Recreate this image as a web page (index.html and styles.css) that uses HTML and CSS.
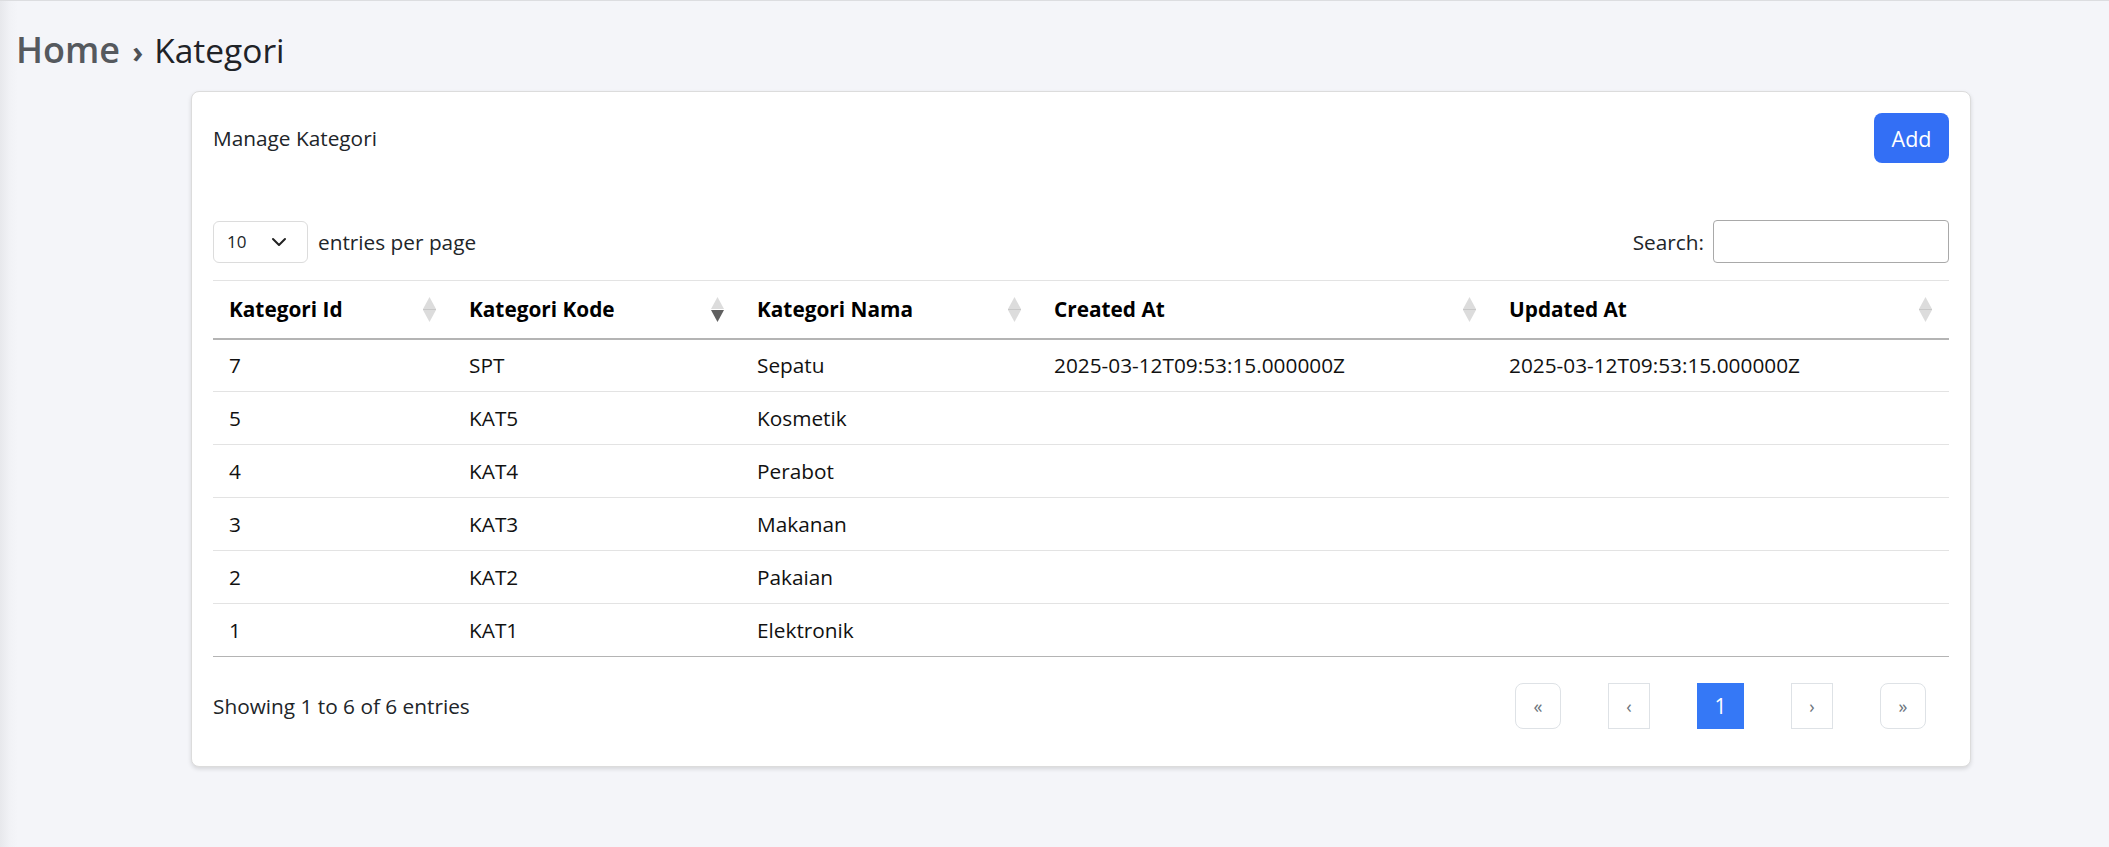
FILE: index.html
```html
<!DOCTYPE html>
<html lang="id">
<head>
<meta charset="utf-8">
<title>Kategori</title>
<link rel="stylesheet" href="styles.css">
</head>
<body>
<div class="page">
  <h1 class="crumbs"><span class="crumb-home">Home</span><span class="crumb-sep">›</span><span class="crumb-current">Kategori</span></h1>
  <div class="main">
    <section class="card">
      <div class="card-head">
        <span class="card-title">Manage Kategori</span>
        <button class="btn-add" type="button">Add</button>
      </div>
      <div class="dt-top">
        <div class="dt-length">
          <div class="select"><span>10</span>
            <svg class="chev" width="16" height="10" viewBox="0 0 16 10"><path d="M2 2l6 6 6-6" fill="none" stroke="#222" stroke-width="2" stroke-linecap="round" stroke-linejoin="round"/></svg>
          </div>
          <span>entries per page</span>
        </div>
        <label class="dt-search">Search:<span class="search-box"></span></label>
      </div>
      <table class="grid">
        <colgroup>
          <col class="c1"><col class="c2"><col class="c3"><col class="c4"><col class="c5">
        </colgroup>
        <thead>
          <tr>
            <th><div class="th-in"><span>Kategori Id</span><svg class="sort" width="13" height="25" viewBox="0 0 13 25"><polygon points="6.5,0 13,12 0,12" fill="#dcdcdc"/><polygon points="0,13 13,13 6.5,25" fill="#dcdcdc"/><line x1="0" y1="12.5" x2="13" y2="12.5" stroke="#c8c8c8" stroke-width="1"/></svg></div></th>
            <th><div class="th-in"><span>Kategori Kode</span><svg class="sort" width="13" height="25" viewBox="0 0 13 25"><polygon points="6.5,0 13,12 0,12" fill="#dcdcdc"/><polygon points="0,13 13,13 6.5,25" fill="#606060"/></svg></div></th>
            <th><div class="th-in"><span>Kategori Nama</span><svg class="sort" width="13" height="25" viewBox="0 0 13 25"><polygon points="6.5,0 13,12 0,12" fill="#dcdcdc"/><polygon points="0,13 13,13 6.5,25" fill="#dcdcdc"/><line x1="0" y1="12.5" x2="13" y2="12.5" stroke="#c8c8c8" stroke-width="1"/></svg></div></th>
            <th><div class="th-in"><span>Created At</span><svg class="sort" width="13" height="25" viewBox="0 0 13 25"><polygon points="6.5,0 13,12 0,12" fill="#dcdcdc"/><polygon points="0,13 13,13 6.5,25" fill="#dcdcdc"/><line x1="0" y1="12.5" x2="13" y2="12.5" stroke="#c8c8c8" stroke-width="1"/></svg></div></th>
            <th><div class="th-in"><span>Updated At</span><svg class="sort" width="13" height="25" viewBox="0 0 13 25"><polygon points="6.5,0 13,12 0,12" fill="#dcdcdc"/><polygon points="0,13 13,13 6.5,25" fill="#dcdcdc"/><line x1="0" y1="12.5" x2="13" y2="12.5" stroke="#c8c8c8" stroke-width="1"/></svg></div></th>
          </tr>
        </thead>
        <tbody>
          <tr><td>7</td><td>SPT</td><td>Sepatu</td><td>2025-03-12T09:53:15.000000Z</td><td>2025-03-12T09:53:15.000000Z</td></tr>
          <tr><td>5</td><td>KAT5</td><td>Kosmetik</td><td></td><td></td></tr>
          <tr><td>4</td><td>KAT4</td><td>Perabot</td><td></td><td></td></tr>
          <tr><td>3</td><td>KAT3</td><td>Makanan</td><td></td><td></td></tr>
          <tr><td>2</td><td>KAT2</td><td>Pakaian</td><td></td><td></td></tr>
          <tr><td>1</td><td>KAT1</td><td>Elektronik</td><td></td><td></td></tr>
        </tbody>
      </table>
      <div class="dt-bottom">
        <span class="info">Showing 1 to 6 of 6 entries</span>
        <nav class="pager">
          <span class="pg pg-first">«</span>
          <span class="pg pg-narrow">‹</span>
          <span class="pg pg-active">1</span>
          <span class="pg pg-narrow">›</span>
          <span class="pg pg-last">»</span>
        </nav>
      </div>
    </section>
  </div>
</div>
</body>
</html>
```
FILE: styles.css
```css
* { box-sizing: border-box; }
html, body { margin: 0; padding: 0; }
body {
  font-family: "Open Sans", "Noto Sans", sans-serif;
  font-size: 20.8px;
  color: #212529;
  background: linear-gradient(to right, #e7e8ec 0px, #f1f2f6 10px, #f4f5f9 18px);
  min-height: 847px;
  border-top: 1px solid #dcdde0;
}
.page { padding-top: 31px; }
.crumbs {
  margin: 0 0 0 16px;
  font-weight: 400;
  display: flex;
  align-items: baseline;
  height: 43px;
  line-height: 1;
}
.crumb-home { font-size: 36px; color: #55595e; font-weight: 600; }
.crumb-sep { font-size: 30px; color: #4d5156; font-weight: 700; margin: 0 11px 0 12px; }
.crumb-current { font-size: 33.5px; color: #1f2328; }
.main { padding: 16px 138px 0 191px; }
.card {
  background: #fff;
  border: 1px solid #dcdcdc;
  border-radius: 8px;
  box-shadow: 0 2px 4px rgba(0,0,0,0.13);
  padding: 21px 21px 37px 21px;
}
.card-head {
  display: flex;
  justify-content: space-between;
  align-items: center;
  height: 50px;
}
.card-title { color: #212529; }
.btn-add {
  width: 75px;
  height: 50px;
  border: 0;
  border-radius: 8px;
  background: #336ff5;
  color: #fff;
  font-family: inherit;
  font-size: 21.5px;
  padding: 0;
}
.dt-top {
  display: flex;
  justify-content: space-between;
  align-items: center;
  margin-top: 57px;
  height: 43px;
}
.dt-length { display: flex; align-items: center; gap: 10px; }
.select {
  width: 95px;
  height: 42px;
  border: 1px solid #dcdcdc;
  border-radius: 6px;
  display: flex;
  align-items: center;
  justify-content: space-between;
  padding: 0 20px 0 13px;
  font-size: 17px;
}
.dt-search { display: flex; align-items: center; gap: 9px; }
.search-box {
  width: 236px;
  height: 43px;
  border: 1px solid #a9a9a9;
  border-radius: 4px;
  background: #fff;
}
.grid {
  width: 100%;
  margin-top: 17px;
  border-collapse: collapse;
  table-layout: fixed;
}
.c1 { width: 240px; }
.c2 { width: 288px; }
.c3 { width: 297px; }
.c4 { width: 455px; }
.c5 { width: 456px; }
.grid thead tr { border-top: 1px solid #e3e3e3; border-bottom: 2px solid #b4b4b4; }
.grid th {
  height: 58px;
  padding: 0 17px 0 16px;
  text-align: left;
  font-weight: 700;
  color: #000;
}
.th-in { display: flex; justify-content: space-between; align-items: center; }
.sort { display: block; }
.grid td {
  height: 53px;
  padding: 0 16px;
  border-bottom: 1px solid #e3e3e3;
  color: #111;
}
.grid tbody tr:last-child td { border-bottom: 1px solid #b4b4b4; }
.dt-bottom {
  display: flex;
  justify-content: space-between;
  align-items: center;
  margin-top: 26px;
  height: 46px;
}
.pager { display: flex; gap: 47px; padding-right: 23px; }
.pg {
  height: 46px;
  width: 42px;
  border: 1px solid #dee2e6;
  display: flex;
  align-items: center;
  justify-content: center;
  color: #6c757d;
  font-size: 18px;
}
.pg-first, .pg-last { width: 46px; border-radius: 8px; }
.pg-active {
  width: 47px;
  background: #3578f6;
  border-color: #3578f6;
  color: #fff;
  font-size: 21px;
}
```
